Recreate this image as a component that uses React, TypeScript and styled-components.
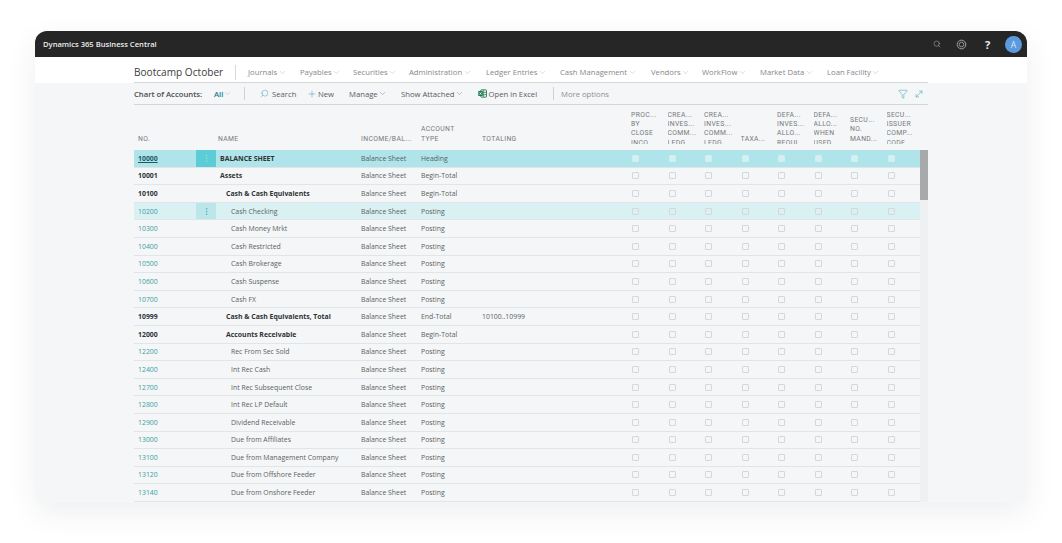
import React from "react";
import styled, { createGlobalStyle } from "styled-components";
import { Search, Plus, ChevronDown, Filter, MoveDiagonal, EllipsisVertical } from "lucide-react";

const Global = createGlobalStyle`
  html, body { margin: 0; padding: 0; background: #fff; }
  body { font-family: "Open Sans", "Noto Sans", sans-serif; }
`;

const Page = styled.div`
  width: 1062px;
  height: 543px;
  padding: 31px 35px 40px;
  box-sizing: border-box;
  overflow: hidden;
`;
const Win = styled.div`
  height: 472px;
  border-radius: 12px;
  overflow: hidden;
  background: #f4f6f8;
  box-shadow: 0 10px 30px rgba(40, 50, 70, 0.08);
  display: flex;
  flex-direction: column;
`;
const TopBar = styled.header`
  flex: 0 0 26px;
  background: #262626;
  display: flex;
  align-items: center;
  padding: 0 5px 0 8px;
  color: #fff;
`;
const Brand = styled.span`
  flex: 1;
  font-size: 7.6px;
  font-weight: 600;
  color: #ececec;
`;
const TopIcon = styled.span`
  display: flex;
  justify-content: center;
  align-items: center;
  width: 25px;
  color: #b9b9b9;
`;
const Help = styled.span`
  width: 27px;
  text-align: center;
  font-size: 11px;
  font-weight: 700;
  color: #eee;
`;
const Avatar = styled.span`
  width: 17px;
  height: 17px;
  margin-left: 4px;
  border-radius: 50%;
  background: #5b9ade;
  color: #dbe9f8;
  font-size: 8.5px;
  display: flex;
  align-items: center;
  justify-content: center;
`;
const NavBand = styled.div`
  flex: 0 0 26px;
  background: #fff;
  padding: 0 99px;
  display: flex;
`;
const NavInner = styled.nav`
  flex: 1;
  display: flex;
  align-items: center;
  border-bottom: 1px solid #d4d7d9;
  box-sizing: border-box;
  height: 26px;
  padding-top: 5px;
`;
const Title = styled.span`
  font-size: 10.1px;
  font-weight: 500;
  color: #3c3c3c;
  width: 101px;
  height: 15px;
  line-height: 14px;
  border-right: 1px solid #d6d8da;
  margin-right: 12px;
  white-space: nowrap;
`;
const NavItem = styled.span<{ $w: number }>`
  width: ${(p) => p.$w}px;
  flex: none;
  display: flex;
  align-items: center;
  font-size: 7.7px;
  color: #85888a;
  white-space: nowrap;
  svg { color: #9ea1a3; margin-left: 0.5px; }
`;
const Content = styled.div`
  flex: 1;
  min-height: 0;
  margin: 0 99px;
`;
const Toolbar = styled.div`
  height: 21px;
  border-bottom: 1px solid #d4d7d9;
  display: flex;
  align-items: center;
  font-size: 7.7px;
  color: #5a5c5e;
`;
const ToolLabel = styled.span`
  font-weight: 600;
  color: #4a4c4e;
  width: 80px;
  white-space: nowrap;
`;
const ToolAll = styled.span`
  display: flex;
  align-items: center;
  width: 30px;
  font-weight: 600;
  color: #15808a;
  svg { color: #9aa; }
`;
const ToolSep = styled.span`
  width: 1px;
  height: 13px;
  background: #cfd2d4;
`;
const ToolBtn = styled.span<{ $w: number; $muted?: boolean; $gap?: number; $ml?: number }>`
  width: ${(p) => p.$w}px;
  flex: none;
  margin-left: ${(p) => p.$ml ?? 0}px;
  display: flex;
  align-items: center;
  gap: ${(p) => p.$gap ?? 0}px;
  white-space: nowrap;
  color: ${(p) => (p.$muted ? "#8c8f91" : "#5a5c5e")};
  svg { flex: none; }
`;
const Teal = styled.span<{ $flip?: boolean }>`
  display: flex;
  color: #2a9ba5;
  ${(p) => p.$flip && "transform: scaleX(-1);"}
`;
const ToolEnd = styled.span`
  margin-left: auto;
  display: flex;
  align-items: center;
  gap: 6px;
  padding-right: 4px;
  color: #2aa0aa;
`;
const cols = "62px 20px 141px 60px 61px 149px repeat(8, 36.5px)";
const HeadRow = styled.div`
  display: grid;
  grid-template-columns: ${cols};
  height: 45px;
  box-sizing: border-box;
  padding-top: 1px;
`;
const HeadCell = styled.div<{ $pad: number }>`
  display: flex;
  align-items: flex-end;
  padding: 0 0 6px ${(p) => p.$pad}px;
`;
const HeadLabel = styled.div<{ $clip?: boolean }>`
  font-family: "Roboto", "Open Sans", sans-serif;
  font-size: 6.8px;
  line-height: 9.4px;
  letter-spacing: 0.35px;
  color: #77797b;
  text-transform: uppercase;
  white-space: pre-line;
  overflow: hidden;
  ${(p) => p.$clip && "max-height: 33.5px;"}
`;
const Body = styled.div`
  display: flex;
`;
const Rows = styled.div`
  width: 786px;
`;
const Scroll = styled.div`
  width: 8px;
  background: #eef0f2;
`;
const Thumb = styled.div`
  height: 50px;
  background: #a8a9aa;
`;
const Row = styled.div<{ $sel?: "strong" | "soft" }>`
  display: grid;
  grid-template-columns: ${cols};
  height: 17.6px;
  box-sizing: border-box;
  align-items: center;
  border-bottom: 1px solid #e2e5e7;
  background: ${(p) => (p.$sel === "strong" ? "#aee4ea" : p.$sel === "soft" ? "#d9f1f2" : "transparent")};
  font-size: 6.9px;
  color: #5c5f61;
  white-space: nowrap;
`;
const NoCell = styled.span<{ $bold?: boolean; $under?: boolean }>`
  padding-left: 4px;
  color: ${(p) => (p.$bold ? "#303234" : "#3c9ea3")};
  font-weight: ${(p) => (p.$bold ? 700 : 400)};
  ${(p) => p.$under && "color:#1c5a62; text-decoration: underline;"}
`;
const ActionCell = styled.span<{ $sel?: "strong" | "soft" }>`
  align-self: stretch;
  display: flex;
  align-items: center;
  justify-content: center;
  color: ${(p) => (p.$sel === "strong" ? "#a5e6ea" : "#2f9ea6")};
  ${(p) => p.$sel && `background: ${p.$sel === "strong" ? "#5ccdd6" : "#bbe7ea"};`}
`;
const NameCell = styled.span<{ $indent: number; $bold?: boolean }>`
  padding-left: ${(p) => 4 + p.$indent}px;
  font-weight: ${(p) => (p.$bold ? 700 : 400)};
  color: ${(p) => (p.$bold ? "#303234" : "#5c5f61")};
`;
const TextCell = styled.span`
  padding-left: 4px;
`;
const CheckCell = styled.span`
  padding-left: 5px;
  display: flex;
`;
const Check = styled.span<{ $on?: boolean }>`
  width: 7px;
  height: 7px;
  box-sizing: border-box;
  border-radius: 1px;
  border: 0.7px solid ${(p) => (p.$on ? "#d0eef0" : "#d5d8da")};
  background: ${(p) => (p.$on ? "#d6f0f2" : "transparent")};
`;

const heads = [
  "No.", "", "Name", "Income/Bal...", "Account\nType", "Totaling",
  "Proc...\nBy\nClose\nInco", "Crea...\nInves...\nComm...\nLedg", "Crea...\nInves...\nComm...\nLedg", "Taxa...",
  "Defa...\nInves...\nAllo...\nRequi", "Defa...\nAllo...\nWhen\nUsed", "Secu...\nNo.\nMand...", "Secu...\nIssuer\nComp...\nCode",
];

type R = [string, string, number, boolean, string, string?];
const rows: R[] = [
  ["10000", "BALANCE SHEET", 0, true, "Heading"],
  ["10001", "Assets", 0, true, "Begin-Total"],
  ["10100", "Cash & Cash Equivalents", 6, true, "Begin-Total"],
  ["10200", "Cash Checking", 11, false, "Posting"],
  ["10300", "Cash Money Mrkt", 11, false, "Posting"],
  ["10400", "Cash Restricted", 11, false, "Posting"],
  ["10500", "Cash Brokerage", 11, false, "Posting"],
  ["10600", "Cash Suspense", 11, false, "Posting"],
  ["10700", "Cash FX", 11, false, "Posting"],
  ["10999", "Cash & Cash Equivalents, Total", 6, true, "End-Total", "10100..10999"],
  ["12000", "Accounts Receivable", 6, true, "Begin-Total"],
  ["12200", "Rec From Sec Sold", 11, false, "Posting"],
  ["12400", "Int Rec Cash", 11, false, "Posting"],
  ["12700", "Int Rec Subsequent Close", 11, false, "Posting"],
  ["12800", "Int Rec LP Default", 11, false, "Posting"],
  ["12900", "Dividend Receivable", 11, false, "Posting"],
  ["13000", "Due from Affiliates", 11, false, "Posting"],
  ["13100", "Due from Management Company", 11, false, "Posting"],
  ["13120", "Due from Offshore Feeder", 11, false, "Posting"],
  ["13140", "Due from Onshore Feeder", 11, false, "Posting"],
];

const nav: [string, number][] = [
  ["Journals", 52], ["Payables", 53], ["Securities", 56], ["Administration", 77], ["Ledger Entries", 74],
  ["Cash Management", 91], ["Vendors", 51], ["WorkFlow", 58], ["Market Data", 67], ["Loan Facility", 70],
];

const Chev = () => <ChevronDown size={9} strokeWidth={1} />;

const Gear = () => (
  <svg width="11" height="11" viewBox="0 0 22 22" fill="none" stroke="currentColor">
    <circle cx="11" cy="11" r="8" strokeWidth="1.5" strokeDasharray="3 1.2" />
    <circle cx="11" cy="11" r="9" strokeWidth="1" />
    <circle cx="11" cy="11" r="4.5" strokeWidth="1.4" />
  </svg>
);

const Excel = () => (
  <svg width="9" height="9" viewBox="0 0 16 16">
    <rect x="5" y="1.5" width="10" height="13" rx="1" fill="none" stroke="#1d7a46" strokeWidth="1.6" />
    <path d="M10 2v12M6 6h9M6 10h9" stroke="#1d7a46" strokeWidth="1.2" />
    <rect x="0.5" y="3.5" width="8" height="9" fill="#1d7a46" />
    <path d="M2.5 5.5l4 5M6.5 5.5l-4 5" stroke="#fff" strokeWidth="1.2" />
  </svg>
);

export default function App() {
  return (
    <Page>
      <Global />
      <Win>
        <TopBar>
          <Brand>Dynamics 365 Business Central</Brand>
          <TopIcon><Search size={8} strokeWidth={1.5} /></TopIcon>
          <TopIcon><Gear /></TopIcon>
          <Help>?</Help>
          <Avatar>A</Avatar>
        </TopBar>
        <NavBand>
          <NavInner>
            <Title>Bootcamp October</Title>
            {nav.map(([t, w]) => (
              <NavItem key={t} $w={w}>{t}<Chev /></NavItem>
            ))}
          </NavInner>
        </NavBand>
        <Content>
          <Toolbar>
            <ToolLabel>Chart of Accounts:</ToolLabel>
            <ToolAll>All<Chev /></ToolAll>
            <ToolSep />
            <ToolBtn $w={47} $gap={3} $ml={15}>
              <Teal $flip><Search size={9} strokeWidth={1.2} /></Teal>Search
            </ToolBtn>
            <ToolBtn $w={42} $gap={1}><Teal><Plus size={10} strokeWidth={1.1} /></Teal>New</ToolBtn>
            <ToolBtn $w={52}>Manage<Chev /></ToolBtn>
            <ToolBtn $w={77}>Show Attached<Chev /></ToolBtn>
            <ToolBtn $w={75} $gap={1.5}><Excel />Open in Excel</ToolBtn>
            <ToolSep />
            <ToolBtn $w={60} $muted $ml={7}>More options</ToolBtn>
            <ToolEnd>
              <Filter size={10} strokeWidth={1.2} />
              <MoveDiagonal size={10} strokeWidth={1.2} />
            </ToolEnd>
          </Toolbar>
          <HeadRow>
            {heads.map((h, i) => (
              <HeadCell key={i} $pad={i === 2 ? 2 : 4}>
                <HeadLabel $clip={h.split("\n").length > 3}>{h}</HeadLabel>
              </HeadCell>
            ))}
          </HeadRow>
          <Body>
            <Rows>
              {rows.map(([no, name, indent, bold, type, total], i) => {
                const sel = i === 0 ? "strong" : i === 3 ? "soft" : undefined;
                return (
                  <Row key={no} $sel={sel}>
                    <NoCell $bold={bold} $under={i === 0}>{no}</NoCell>
                    <ActionCell $sel={sel}>{sel && <EllipsisVertical size={9} strokeWidth={1.2} />}</ActionCell>
                    <NameCell $indent={indent} $bold={bold}>{name}</NameCell>
                    <TextCell>Balance Sheet</TextCell>
                    <TextCell>{type}</TextCell>
                    <TextCell>{total}</TextCell>
                    {Array.from({ length: 8 }, (_, c) => (
                      <CheckCell key={c}><Check $on={i === 0} /></CheckCell>
                    ))}
                  </Row>
                );
              })}
            </Rows>
            <Scroll><Thumb /></Scroll>
          </Body>
        </Content>
      </Win>
    </Page>
  );
}
